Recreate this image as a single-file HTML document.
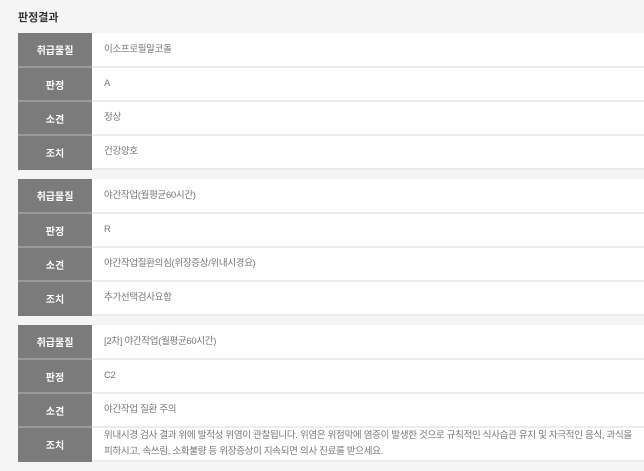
<!DOCTYPE html>
<html><head><meta charset="utf-8"><style>
body{margin:0;background:#f5f5f5;width:644px;height:471px;overflow:hidden;font-family:"Liberation Sans","Noto Sans CJK KR",sans-serif;}
h3{position:absolute;left:18px;top:9px;margin:0;font-size:11px;font-weight:bold;color:#333;}
table{position:absolute;left:18px;width:640px;border-collapse:collapse;}
tr{height:34px;}
td{box-sizing:border-box;height:34px;border-bottom:2px solid #ececec;font-size:9.5px;color:#777;padding:0;vertical-align:middle;}
td.l{width:74px;background:#7b7b7b;color:#fff;font-weight:bold;text-align:center;font-size:10px;border-bottom:2px solid #999;}
td.v{background:#fff;padding-left:12px;line-height:16px;letter-spacing:-0.3px;}
tr:last-child td.l{border-bottom-color:#7b7b7b}
</style></head><body>
<h3>판정결과</h3>
<table style="top:33px">
<tr><td class="l">취급물질</td><td class="v">이소프로필알코올</td></tr>
<tr><td class="l">판정</td><td class="v">A</td></tr>
<tr><td class="l">소견</td><td class="v">정상</td></tr>
<tr><td class="l">조치</td><td class="v">건강양호</td></tr>
</table>
<table style="top:179px">
<tr><td class="l">취급물질</td><td class="v">야간작업(월평균60시간)</td></tr>
<tr><td class="l">판정</td><td class="v">R</td></tr>
<tr><td class="l">소견</td><td class="v">야간작업질환의심(위장증상/위내시경요)</td></tr>
<tr><td class="l">조치</td><td class="v">추가선택검사요함</td></tr>
</table>
<table style="top:325px">
<tr><td class="l">취급물질</td><td class="v">[2차] 야간작업(월평균60시간)</td></tr>
<tr><td class="l">판정</td><td class="v">C2</td></tr>
<tr><td class="l">소견</td><td class="v">야간작업 질환 주의</td></tr>
<tr><td class="l">조치</td><td class="v" style="padding-right:14px">위내시경 검사 결과 위에 발적성 위염이 관찰됩니다. 위염은 위점막에 염증이 발생한 것으로 규칙적인 식사습관 유지 및 자극적인 음식, 과식을<br>피하시고, 속쓰림, 소화불량 등 위장증상이 지속되면 의사 진료를 받으세요.</td></tr>
</table>
</body></html>
